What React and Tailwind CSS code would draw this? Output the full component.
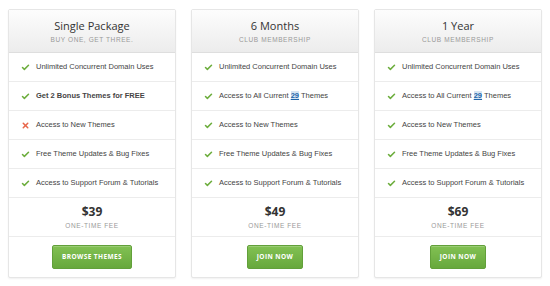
import { Check, X } from "lucide-react";

const plans = [
  {
    title: "Single Package",
    sub: "Buy one, get three.",
    price: "$39",
    cta: "Browse Themes",
    features: [
      { text: "Unlimited Concurrent Domain Uses", ok: true },
      { text: "Get 2 Bonus Themes for FREE", ok: true, bold: true },
      { text: "Access to New Themes", ok: false },
      { text: "Free Theme Updates & Bug Fixes", ok: true },
      { text: "Access to Support Forum & Tutorials", ok: true },
    ],
  },
  {
    title: "6 Months",
    sub: "Club Membership",
    price: "$49",
    cta: "Join Now",
    features: [
      { text: "Unlimited Concurrent Domain Uses", ok: true },
      { text: "all", ok: true },
      { text: "Access to New Themes", ok: true },
      { text: "Free Theme Updates & Bug Fixes", ok: true },
      { text: "Access to Support Forum & Tutorials", ok: true },
    ],
  },
  {
    title: "1 Year",
    sub: "Club Membership",
    price: "$69",
    cta: "Join Now",
    features: [
      { text: "Unlimited Concurrent Domain Uses", ok: true },
      { text: "all", ok: true },
      { text: "Access to New Themes", ok: true },
      { text: "Free Theme Updates & Bug Fixes", ok: true },
      { text: "Access to Support Forum & Tutorials", ok: true },
    ],
  },
];

function Feature({ f }) {
  return (
    <div className="h-[29px] border-b border-[#ececec] flex items-center pl-[12px] gap-[6px]">
      {f.ok ? (
        <Check size={9} strokeWidth={4} className="text-[#6cad3c] shrink-0" />
      ) : (
        <X size={9} strokeWidth={4} className="text-[#e8664a] shrink-0" />
      )}
      <span
        className={`text-[7.5px] text-[#444] ${f.bold ? "font-bold text-[#333]" : ""}`}
      >
        {f.text === "all" ? (
          <>
            Access to All Current{" "}
            <span className="font-bold text-[#2266aa] underline bg-[#d6e4f2]">29</span>{" "}
            Themes
          </>
        ) : (
          f.text
        )}
      </span>
    </div>
  );
}

function Card({ plan }) {
  return (
    <div className="w-[168px] bg-white border border-[#e6e6e6] rounded-[2px] shadow-[0_1px_2px_rgba(0,0,0,0.06)] flex flex-col">
      <div className="h-[43px] bg-gradient-to-b from-[#fdfdfd] to-[#ececec] border-b border-[#dedede] flex flex-col items-center pt-[9px]">
        <div className="text-[11px] leading-[14px] text-[#333] font-['Open_Sans',sans-serif]">
          {plan.title}
        </div>
        <div className="text-[6.5px] leading-[10px] mt-[2px] uppercase tracking-[0.6px] text-[#999] font-['Liberation_Sans',sans-serif]">
          {plan.sub}
        </div>
      </div>
      {plan.features.map((f, i) => (
        <Feature key={i} f={f} />
      ))}
      <div className="h-[39px] border-b border-[#ececec] flex flex-col items-center pt-[6px]">
        <div className="text-[12px] leading-[15px] font-bold text-[#333] font-['Open_Sans',sans-serif]">
          {plan.price}
        </div>
        <div className="text-[6.5px] leading-[10px] mt-[2px] uppercase tracking-[0.6px] text-[#999]">
          One-Time Fee
        </div>
      </div>
      <div className="h-[40px] flex items-center justify-center">
        <div className="h-[24px] px-[9px] rounded-[2px] bg-gradient-to-b from-[#82c153] to-[#67a83c] border border-[#62a03a] flex items-center justify-center text-white text-[6.5px] font-bold uppercase tracking-[0.4px] font-['Open_Sans',sans-serif] shadow-[inset_0_1px_0_rgba(255,255,255,0.2)]">
          {plan.cta}
        </div>
      </div>
    </div>
  );
}

export default function App() {
  return (
    <div className="w-[550px] h-[286px] bg-white font-['Liberation_Sans',Arial,sans-serif] flex items-start gap-[15px] pl-[8px] pt-[9px]">
      {plans.map((p, i) => (
        <Card key={i} plan={p} />
      ))}
    </div>
  );
}
